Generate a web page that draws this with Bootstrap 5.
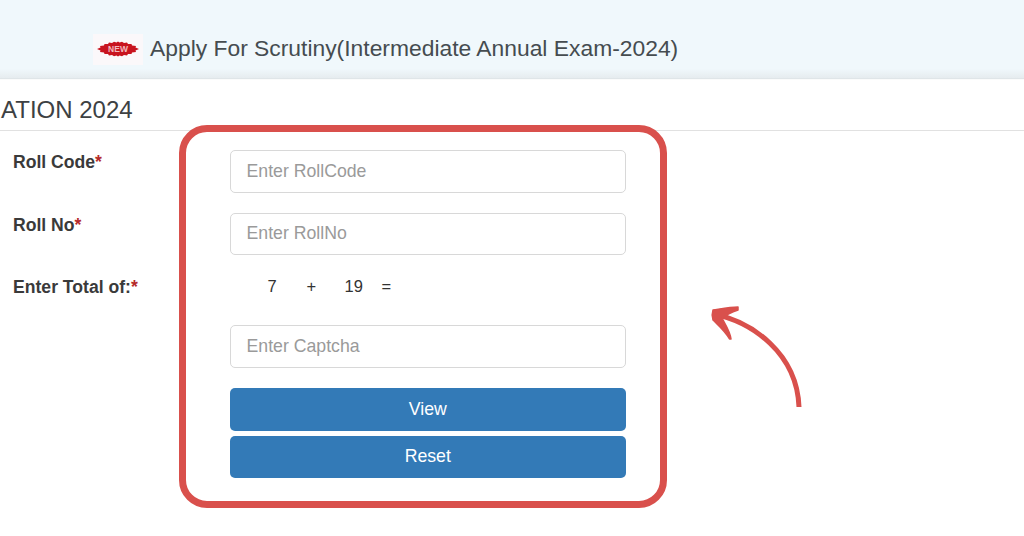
<!DOCTYPE html>
<html lang="en">
<head>
<meta charset="utf-8">
<title>Apply For Scrutiny</title>
<link href="https://cdn.jsdelivr.net/npm/bootstrap@5.3.0/dist/css/bootstrap.min.css" rel="stylesheet">
<style>
html,body{height:536px;overflow:hidden;background:#fff}
body{font-family:"Liberation Sans",Arial,sans-serif;color:#333;position:relative}
.top-band{height:78px;padding-left:93px;padding-top:33.5px;background:linear-gradient(#f0f8fc 0,#f0f8fc 88%,#e6ecef 100%);box-shadow:0 1px 1px #dfe5e8}
.new-box{width:50px;height:31px;background:#fbf8fa}
.top-title{font-size:22.85px;line-height:28px;color:#454c50;margin:0 0 0 7px;font-weight:400}
.sec-head{height:53px;padding:17px 0 0 1px;font-size:24px;line-height:30px;color:#3d4143;border-bottom:1px solid #e1e1e1;margin:0;font-weight:400}
.form-wrap{padding:19px 0 0 13px}
.lbl{width:216.5px;font-size:17.6px;font-weight:700;color:#3a3a3a;line-height:22px;padding-top:1px;flex:none}
.req{color:#b52a2a}
.fld{width:396.5px}
.frm-in{height:42.5px;border:1px solid #d8d8d8;border-radius:5px;font-size:17.7px;padding:0 16px;color:#555;box-shadow:none}
.frm-in::placeholder{color:#9a9a9a;opacity:1}
.row-a{margin-bottom:20px}
.row-c{height:50px}
.sum{font-size:16.5px;line-height:22px;padding:0 0 0 38px}
.sum span{display:inline-block}
.s1{width:39px}.s2{width:38px}.s3{width:37px}
.frm-cap{margin-bottom:20.5px;flex:none}
.act{height:42.5px;background:#337ab7;border:0;border-radius:5px;color:#fff;font-size:17.7px;width:100%;padding:0}
.act:hover{background:#337ab7;color:#fff}
.act-gap{margin-bottom:5px}
.red-frame{position:absolute;left:179px;top:125px;width:488px;height:383px;border:7px solid #d9504c;border-radius:28px;pointer-events:none}
.red-arrow{position:absolute;left:700px;top:295px}
</style>
</head>
<body>
<div class="top-band d-flex align-items-start">
  <div class="new-box d-flex align-items-center justify-content-center">
    <svg width="46" height="18" viewBox="0 0 46 18" aria-hidden="true">
      <polygon fill="#c8141f" points="2,9 5.500,7.500 5,6 9,5.500 9.500,4 13,4 14,2.500 17,3 19,1.800 21.500,2.600 23,1.600 24.500,2.600 27,1.800 29,3 32,2.500 33,4 36.500,4 37,5.500 41,6 40.500,7.500 44,9 40.500,10.500 41,12 37,12.500 36.500,14 33,14 32,15.500 29,15 27,16.200 24.500,15.400 23,16.400 21.500,15.400 19,16.200 17,15 14,15.500 13,14 9.500,14 9,12.500 5,12 5.500,10.500"/>
      <text x="23" y="12" text-anchor="middle" font-family="Liberation Sans, Arial, sans-serif" font-size="8.500" font-weight="700" fill="#f3b9bd">NEW</text>
    </svg>
  </div>
  <h1 class="top-title">Apply For Scrutiny(Intermediate Annual Exam-2024)</h1>
</div>
<h2 class="sec-head">ATION 2024</h2>
<form class="form-wrap">
  <div class="d-flex row-a">
    <label class="lbl" for="rc">Roll Code<span class="req">*</span></label>
    <div class="fld"><input id="rc" class="form-control frm-in" placeholder="Enter RollCode"></div>
  </div>
  <div class="d-flex row-a">
    <label class="lbl" for="rn">Roll No<span class="req">*</span></label>
    <div class="fld"><input id="rn" class="form-control frm-in" placeholder="Enter RollNo"></div>
  </div>
  <div class="d-flex row-c">
    <label class="lbl" for="cp">Enter Total of:<span class="req">*</span></label>
    <div class="fld sum d-flex"><span class="s1">7</span><span class="s2">+</span><span class="s3">19</span><span>=</span></div>
  </div>
  <div class="d-flex">
    <div class="lbl"></div>
    <div class="fld d-flex flex-column">
      <input id="cp" class="form-control frm-in frm-cap" placeholder="Enter Captcha">
      <button type="button" class="btn act act-gap">View</button>
      <button type="button" class="btn act">Reset</button>
    </div>
  </div>
</form>
<div class="red-frame"></div>
<svg class="red-arrow" width="120" height="125" viewBox="0 0 120 125" aria-hidden="true">
  <path d="M14 19 C52 27 97 58 99 112" fill="none" stroke="#d9504c" stroke-width="5" stroke-linecap="butt"/>
  <path d="M13 15 C20 14 30 12 38 12 L38 15 C32 17 27 19 22 23 C25 29 30 36 31 44 L29.500 44 C25 36 18 30 13 25 C12 22 12 18 13 15 Z" fill="#d9504c" stroke="#d9504c" stroke-width="1.500" stroke-linejoin="round"/>
</svg>
</body>
</html>
